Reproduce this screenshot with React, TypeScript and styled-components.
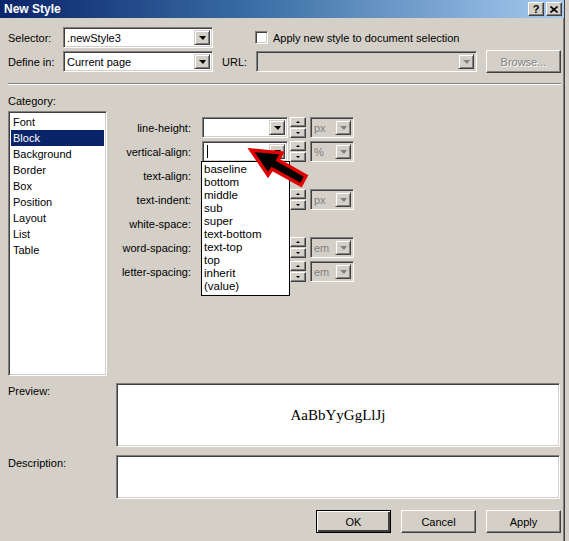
import React from 'react';
import styled, { createGlobalStyle } from 'styled-components';

const GlobalStyle = createGlobalStyle`
  html, body {
    margin: 0;
    padding: 0;
    background: #d4d0c8;
  }
  body {
    font-family: "Liberation Sans", Arial, sans-serif;
    font-size: 11px;
    color: #000;
  }
`;

const categories = ['Font', 'Block', 'Background', 'Border', 'Box', 'Position', 'Layout', 'List', 'Table'];
const alignOptions = ['baseline', 'bottom', 'middle', 'sub', 'super', 'text-bottom', 'text-top', 'top', 'inherit', '(value)'];

interface BlockRow {
  label: string;
  unit?: string;
  popup?: boolean;
}

const blockRows: BlockRow[] = [
  { label: 'line-height:', unit: 'px' },
  { label: 'vertical-align:', unit: '%', popup: true },
  { label: 'text-align:' },
  { label: 'text-indent:', unit: 'px' },
  { label: 'white-space:' },
  { label: 'word-spacing:', unit: 'em' },
  { label: 'letter-spacing:', unit: 'em' }
];

interface ComboProps {
  width: number;
  value?: string;
  disabled?: boolean;
  caret?: boolean;
  children?: React.ReactNode;
}

const Combo = ({ width, value, disabled, caret, children }: ComboProps) => (
  <StyledCombo $w={width} $disabled={disabled}>
    <ComboText $disabled={disabled}>
      {caret && <Caret />}
      {value}
    </ComboText>
    <DropButton $disabled={disabled} />
    {children}
  </StyledCombo>
);

const Spin = () => (
  <StyledSpin>
    <SpinButton $dir="up" />
    <SpinButton $dir="down" />
  </StyledSpin>
);

const App = () => {
  return (
    <>
      <GlobalStyle />
      <Window>
        <TitleBar>
          <TitleText>New Style</TitleText>
          <CaptionButtons>
            <CaptionButton>?</CaptionButton>
            <CaptionButton>
              <svg width="8" height="7" viewBox="0 0 8 7">
                <path d="M0.5 0.5 L7.5 6.5 M7.5 0.5 L0.5 6.5" stroke="#000" strokeWidth="1.6" />
              </svg>
            </CaptionButton>
          </CaptionButtons>
        </TitleBar>

        <Body>
          <TopRow>
            <FieldLabel $w={55}>Selector:</FieldLabel>
            <Combo width={150} value=".newStyle3" />
            <CheckLabel>
              <CheckBox />
              Apply new style to document selection
            </CheckLabel>
          </TopRow>
          <TopRow $tall>
            <FieldLabel $w={55}>Define in:</FieldLabel>
            <Combo width={150} value="Current page" />
            <FieldLabel $w={43} $indent={9}>URL:</FieldLabel>
            <Combo width={221} disabled />
            <PushButton $push disabled>Browse...</PushButton>
          </TopRow>

          <Separator />

          <SectionLabel>Category:</SectionLabel>
          <Main>
            <ListBox>
              {categories.map(c => (
                <ListItem key={c} $selected={c === 'Block'}>
                  {c}
                </ListItem>
              ))}
            </ListBox>

            <FormPanel>
              {blockRows.map(row => (
                <FormRow key={row.label}>
                  <RowLabel>{row.label}</RowLabel>
                  <Combo width={86} caret={row.popup}>
                    {row.popup && (
                      <>
                        <Popup>
                          {alignOptions.map(o => (
                            <PopupItem key={o}>{o}</PopupItem>
                          ))}
                        </Popup>
                        <PointerArrow viewBox="245 144 66 46">
                          <polygon
                            points="250,150 281,153 277,160 305,176 300,185 271,169 267,175"
                            fill="#000"
                            stroke="#e00000"
                            strokeWidth="3.5"
                            strokeLinejoin="miter"
                          />
                        </PointerArrow>
                      </>
                    )}
                  </Combo>
                  {row.unit && (
                    <>
                      <Spin />
                      <UnitSlot>
                        <Combo width={44} value={row.unit} disabled />
                      </UnitSlot>
                    </>
                  )}
                </FormRow>
              ))}
            </FormPanel>
          </Main>

          <BoxRow>
            <BoxLabel>Preview:</BoxLabel>
            <TextBox $h={64}>
              <PreviewText>AaBbYyGgLlJj</PreviewText>
            </TextBox>
          </BoxRow>
          <BoxRow $gap={8}>
            <BoxLabel>Description:</BoxLabel>
            <TextBox $h={44} />
          </BoxRow>

          <ButtonRow>
            <PushButton $default>OK</PushButton>
            <PushButton>Cancel</PushButton>
            <PushButton>Apply</PushButton>
          </ButtonRow>
        </Body>
      </Window>
    </>
  );
};

export default App;

const Window = styled.div`
  width: 564px;
  height: 541px;
  background: #d4d0c8;
  border-right: 1px solid #404040;
  box-shadow: inset -1px 0 #808080;
  display: flex;
  flex-direction: column;
  overflow: hidden;
`;

const TitleBar = styled.div`
  height: 18px;
  flex-shrink: 0;
  display: flex;
  align-items: center;
  justify-content: space-between;
  padding: 0 2px 0 4px;
  background: linear-gradient(to right, #0a246a 0%, #3a6ea5 45%, #a6caf0 100%);
`;

const TitleText = styled.span`
  color: #fff;
  font-weight: bold;
  font-size: 12px;
  font-family: "Liberation Sans", Arial, sans-serif;
`;

const CaptionButtons = styled.div`
  display: flex;
  gap: 2px;
`;

const CaptionButton = styled.div`
  width: 16px;
  height: 14px;
  box-sizing: border-box;
  background: #d4d0c8;
  border: 1px solid;
  border-color: #fff #404040 #404040 #fff;
  box-shadow: inset -1px -1px #808080;
  display: flex;
  align-items: center;
  justify-content: center;
  font-weight: bold;
  font-size: 11px;
  line-height: 1;
`;

const Body = styled.div`
  flex: 1;
  display: flex;
  flex-direction: column;
  padding: 9px 3px 0 8px;
`;

const TopRow = styled.div<{ $tall?: boolean }>`
  display: flex;
  align-items: center;
  height: 21px;
  margin-top: ${p => (p.$tall ? '3px' : '0')};
`;

const FieldLabel = styled.span<{ $w: number; $indent?: number }>`
  width: ${p => p.$w}px;
  padding-left: ${p => p.$indent ?? 0}px;
  box-sizing: border-box;
  white-space: nowrap;
`;

const CheckLabel = styled.label`
  display: flex;
  align-items: center;
  gap: 5px;
  margin-left: 42px;
  white-space: nowrap;
`;

const CheckBox = styled.span`
  width: 13px;
  height: 13px;
  box-sizing: border-box;
  background: #fff;
  border: 1px solid;
  border-color: #808080 #fff #fff #808080;
  box-shadow: inset 1px 1px #404040, inset -1px -1px #d4d0c8;
`;

const StyledCombo = styled.div<{ $w: number; $disabled?: boolean }>`
  position: relative;
  box-sizing: border-box;
  width: ${p => p.$w}px;
  height: 21px;
  flex-shrink: 0;
  display: flex;
  align-items: stretch;
  padding: 2px;
  border: 1px solid;
  border-color: #808080 #fff #fff #808080;
  box-shadow: inset 1px 1px #404040, inset -1px -1px #d4d0c8;
  background: ${p => (p.$disabled ? '#d4d0c8' : '#fff')};
`;

const ComboText = styled.span<{ $disabled?: boolean }>`
  flex: 1;
  display: flex;
  align-items: center;
  padding-left: 1px;
  overflow: hidden;
  white-space: nowrap;
  color: ${p => (p.$disabled ? '#808080' : '#000')};
`;

const Caret = styled.span`
  width: 1px;
  height: 13px;
  background: #000;
  margin-left: 1px;
`;

const DropButton = styled.span<{ $disabled?: boolean }>`
  width: 16px;
  box-sizing: border-box;
  background: #d4d0c8;
  border: 1px solid;
  border-color: #d4d0c8 #404040 #404040 #d4d0c8;
  box-shadow: inset 1px 1px #fff, inset -1px -1px #808080;
  display: flex;
  align-items: center;
  justify-content: center;

  &::after {
    content: '';
    border-left: 4px solid transparent;
    border-right: 3px solid transparent;
    border-top: 4px solid ${p => (p.$disabled ? '#808080' : '#000')};
    margin-top: 1px;
  }
`;

const PushButton = styled.button<{ $default?: boolean; $push?: boolean }>`
  width: 75px;
  height: 23px;
  box-sizing: border-box;
  margin-left: ${p => (p.$push ? '9px' : '0')};
  padding: 0;
  background: #d4d0c8;
  font-family: "Liberation Sans", Arial, sans-serif;
  font-size: 11px;
  color: #000;
  border: 1px solid;
  border-color: ${p => (p.$default ? '#000' : '#fff #404040 #404040 #fff')};
  box-shadow: ${p =>
    p.$default
      ? 'inset 1px 1px #fff, inset -2px -2px #404040, inset -1px -1px #808080'
      : 'inset -1px -1px #808080'};

  &:disabled {
    color: #808080;
    text-shadow: 1px 1px #fff;
  }
`;

const Separator = styled.div`
  margin-top: 11px;
  height: 0;
  border-top: 1px solid #808080;
  border-bottom: 1px solid #fff;
`;

const SectionLabel = styled.div`
  margin-top: 10px;
  line-height: 13px;
`;

const Main = styled.div`
  margin-top: 3px;
  height: 265px;
  display: grid;
  grid-template-columns: 99px 1fr;
`;

const ListBox = styled.div`
  box-sizing: border-box;
  background: #fff;
  border: 1px solid;
  border-color: #808080 #fff #fff #808080;
  box-shadow: inset 1px 1px #404040, inset -1px -1px #d4d0c8;
  padding: 2px 2px;
`;

const ListItem = styled.div<{ $selected?: boolean }>`
  height: 16px;
  line-height: 16px;
  padding-left: 2px;
  background: ${p => (p.$selected ? '#0a246a' : 'transparent')};
  color: ${p => (p.$selected ? '#fff' : '#000')};
`;

const FormPanel = styled.div`
  padding-top: 6px;
  display: flex;
  flex-direction: column;
  gap: 3px;
`;

const FormRow = styled.div`
  display: flex;
  align-items: center;
  height: 21px;
`;

const RowLabel = styled.span`
  width: 84px;
  margin-right: 11px;
  text-align: right;
  white-space: nowrap;
`;

const StyledSpin = styled.div`
  margin-left: 2px;
  display: flex;
  flex-direction: column;
  gap: 1px;
`;

const SpinButton = styled.span<{ $dir: 'up' | 'down' }>`
  width: 16px;
  height: 10px;
  box-sizing: border-box;
  background: #d4d0c8;
  border: 1px solid;
  border-color: #fff #404040 #404040 #fff;
  box-shadow: inset -1px -1px #808080;
  display: flex;
  align-items: center;
  justify-content: center;

  &::after {
    content: '';
    border-left: 2px solid transparent;
    border-right: 2px solid transparent;
    ${p => (p.$dir === 'up' ? 'border-bottom: 2px solid #000;' : 'border-top: 2px solid #000;')}
  }
`;

const UnitSlot = styled.div`
  margin-left: 4px;
`;

const Popup = styled.div`
  position: absolute;
  left: -2px;
  top: 19px;
  width: 89px;
  box-sizing: border-box;
  background: #fff;
  border: 1px solid #000;
  padding: 1px 0 2px;
  z-index: 2;
`;

const PopupItem = styled.div`
  height: 13px;
  line-height: 13px;
  padding-left: 2px;
  font-size: 11.5px;
  white-space: nowrap;
`;

const PointerArrow = styled.svg`
  position: absolute;
  left: 43px;
  top: 2px;
  width: 66px;
  height: 46px;
  z-index: 3;
  overflow: visible;
`;

const BoxRow = styled.div<{ $gap?: number }>`
  margin-top: ${p => p.$gap ?? 7}px;
  display: grid;
  grid-template-columns: 108px 444px;
`;

const BoxLabel = styled.div`
  padding-top: 2px;
  line-height: 13px;
`;

const TextBox = styled.div<{ $h: number }>`
  height: ${p => p.$h}px;
  box-sizing: border-box;
  background: #fff;
  border: 1px solid;
  border-color: #808080 #fff #fff #808080;
  box-shadow: inset 1px 1px #404040, inset -1px -1px #d4d0c8;
  display: flex;
  align-items: center;
  justify-content: center;
`;

const PreviewText = styled.span`
  font-family: "Liberation Serif", "Times New Roman", serif;
  font-size: 15px;
`;

const ButtonRow = styled.div`
  margin-top: 11px;
  display: flex;
  justify-content: flex-end;
  gap: 10px;
`;
